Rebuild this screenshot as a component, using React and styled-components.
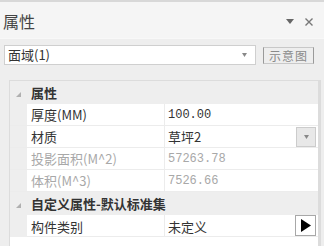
import React from "react";
import styled, { createGlobalStyle } from "styled-components";

const GlobalStyle = createGlobalStyle`
  html, body {
    margin: 0;
    padding: 0;
    background: #eeeeee;
  }
  body {
    font-family: "Noto Sans CJK SC", "Liberation Sans", sans-serif;
  }
`;

const Panel = styled.div`
  width: 324px;
  height: 246px;
  overflow: hidden;
  display: flex;
  flex-direction: column;
  background: #eeeeee;
  box-sizing: border-box;
`;

const Header = styled.div`
  height: 36px;
  flex: none;
  border-top: 2px solid #d8d8d8;
  border-bottom: 1px solid #f8f8f8;
  background: #f5f5f5;
  display: flex;
  align-items: center;
  padding: 0 11px 0 3px;
  box-sizing: content-box;
`;

const Title = styled.div`
  flex: 1;
  font-size: 16px;
  color: #444;
  line-height: 20px;
  padding-top: 2px;
`;

const HeaderIcons = styled.div`
  display: flex;
  align-items: center;
  gap: 11px;
  padding-top: 3px;
`;

const Toolbar = styled.div`
  display: flex;
  align-items: center;
  padding: 6px 0 0 4px;
  height: 20px;
  flex: none;
  gap: 7px;
`;

const Combo = styled.div`
  width: 252px;
  height: 20px;
  box-sizing: border-box;
  border: 1px solid #cfcfcf;
  background: #fff;
  display: flex;
  align-items: center;
  padding: 0 8px 0 3px;
  font-size: 13px;
  color: #333;
`;

const ComboText = styled.span`
  flex: 1;
  line-height: 18px;
`;

const SchemeButton = styled.div`
  width: 51px;
  height: 17px;
  box-sizing: border-box;
  border: 1px solid #c8c8c8;
  border-left-color: #9a9a9a;
  border-right-color: #9a9a9a;
  display: flex;
  align-items: center;
  justify-content: center;
  font-size: 12px;
  color: #8a8a8a;
  letter-spacing: 1px;
`;

const GridWrap = styled.div`
  margin: 15px 0 0 9px;
  width: 312px;
  flex: 1;
  box-sizing: border-box;
  border: 1px solid #dcdcdc;
  border-right: 3px solid #dcdcdc;
  border-bottom: none;
  background: #fff;
`;

const Row = styled.div`
  display: grid;
  grid-template-columns: 17px 138px 1fr;
  height: ${p => (p.category ? 23 : 22)}px;
  box-sizing: border-box;
  border-bottom: ${p => (p.category ? "none" : "1px solid #ececec")};
  background: ${p => (p.category ? "#eeeeee" : "#fff")};
  font-size: 13px;
`;

const Gutter = styled.div`
  background: #eeeeee;
  display: flex;
  align-items: center;
  justify-content: center;
  padding-top: 4px;
  box-sizing: border-box;
`;

const NameCell = styled.div`
  display: flex;
  align-items: center;
  padding-left: 4px;
  color: ${p => (p.dim ? "#a8a8a8" : "#333")};
  font-weight: ${p => (p.bold ? 700 : 400)};
  white-space: nowrap;
  overflow: hidden;
  border-right: ${p => (p.bold ? "none" : "1px solid #ececec")};
  grid-column: ${p => (p.bold ? "2 / 4" : "auto")};
`;

const ValueCell = styled.div`
  display: flex;
  align-items: center;
  padding-left: 3px;
  padding-right: 2px;
  color: ${p => (p.dim ? "#a8a8a8" : "#333")};
  font-family: ${p => (p.mono ? '"Liberation Mono", "Noto Sans CJK SC", monospace' : "inherit")};
  font-size: ${p => (p.mono ? "12px" : "13px")};
`;

const ValueText = styled.span`
  flex: 1;
`;

const DropButton = styled.div`
  width: 20px;
  height: 20px;
  box-sizing: border-box;
  border: 1px solid #cccccc;
  background: #e8e8e8;
  display: flex;
  align-items: center;
  justify-content: center;
`;

const PlayButton = styled.div`
  width: 21px;
  height: 21px;
  box-sizing: border-box;
  border: 1px solid #a8a8a8;
  background: #fff;
  display: flex;
  align-items: center;
  justify-content: center;
  margin-bottom: 1px;
`;

const Expander = () => (
  <svg width="5" height="5" viewBox="0 0 5 5">
    <polygon points="5,0 5,5 0,5" fill="#b0b0b0" />
  </svg>
);

const SmallDown = ({ color = "#777", w = 5 }) => (
  <svg width={w} height={Math.ceil(w / 2) + 1} viewBox={`0 0 ${w} ${Math.ceil(w / 2) + 1}`}>
    <polygon points={`0,0 ${w},0 ${w / 2},${Math.ceil(w / 2) + 1}`} fill={color} />
  </svg>
);

const rows = [
  { type: "cat", name: "属性" },
  { name: "厚度(MM)", value: "100.00", mono: true },
  { name: "材质", value: "草坪2", drop: true },
  { name: "投影面积(M^2)", value: "57263.78", dim: true, mono: true },
  { name: "体积(M^3)", value: "7526.66", dim: true, mono: true },
  { type: "cat", name: "自定义属性-默认标准集" },
  { name: "构件类别", value: "未定义", play: true },
];

export default function App() {
  return (
    <>
      <GlobalStyle />
      <Panel>
        <Header>
          <Title>属性</Title>
          <HeaderIcons>
            <SmallDown color="#666" w={8} />
            <svg width="8" height="8" viewBox="0 0 8 8">
              <path d="M0.5 0.5 L7.5 7.5 M7.5 0.5 L0.5 7.5" stroke="#777" strokeWidth="1.4" />
            </svg>
          </HeaderIcons>
        </Header>
        <Toolbar>
          <Combo>
            <ComboText>面域(1)</ComboText>
            <SmallDown color="#888" w={5} />
          </Combo>
          <SchemeButton>示意图</SchemeButton>
        </Toolbar>
        <GridWrap>
          {rows.map((r, i) =>
            r.type === "cat" ? (
              <Row category key={i}>
                <Gutter>
                  <Expander />
                </Gutter>
                <NameCell bold>{r.name}</NameCell>
              </Row>
            ) : (
              <Row key={i}>
                <Gutter />
                <NameCell dim={r.dim}>{r.name}</NameCell>
                <ValueCell dim={r.dim} mono={r.mono}>
                  <ValueText>{r.value}</ValueText>
                  {r.drop && (
                    <DropButton>
                      <SmallDown color="#888" w={5} />
                    </DropButton>
                  )}
                  {r.play && (
                    <PlayButton>
                      <svg width="10" height="13" viewBox="0 0 10 13">
                        <polygon points="0,0 10,6.5 0,13" fill="#000" />
                      </svg>
                    </PlayButton>
                  )}
                </ValueCell>
              </Row>
            )
          )}
        </GridWrap>
      </Panel>
    </>
  );
}
